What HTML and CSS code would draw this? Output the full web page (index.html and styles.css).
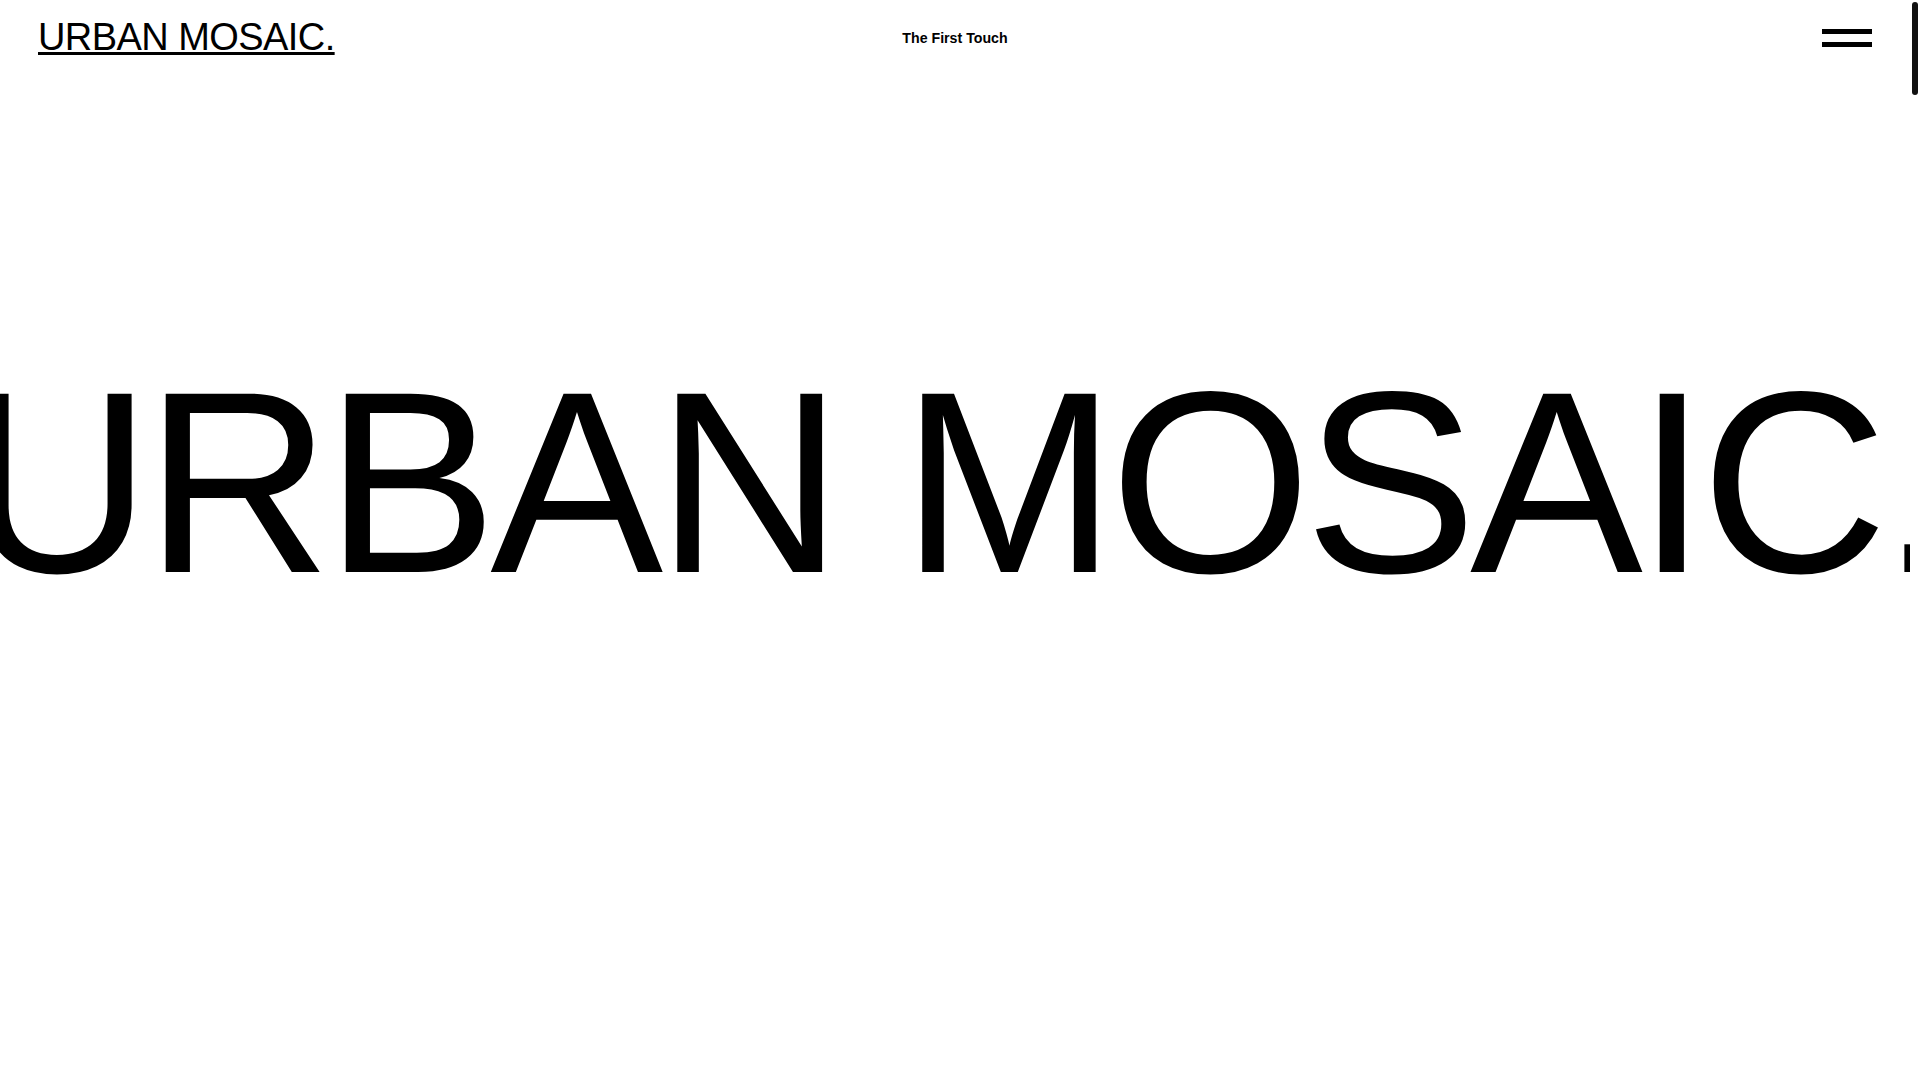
FILE: index.html
```html
<!DOCTYPE html>
<html lang="en">
<head>
<meta charset="utf-8">
<title>Urban Mosaic</title>
<link rel="stylesheet" href="styles.css">
</head>
<body>
<div class="app">
  <div class="viewport">
    <header class="site-header">
      <a class="logo" href="#">URBAN MOSAIC.</a>
      <p class="tagline">The First Touch</p>
      <button class="menu-btn" aria-label="Menu">
        <span class="bar"></span>
        <span class="bar"></span>
      </button>
    </header>
    <main>
      <section class="hero">
        <h1 class="hero-title">URBAN MOSAIC.</h1>
      </section>
    </main>
  </div>
  <div class="scroll-rail" aria-hidden="true">
    <div class="scroll-thumb"></div>
  </div>
</div>
</body>
</html>
```
FILE: styles.css
```css
html,
body {
  margin: 0;
  height: 100%;
  overflow: hidden;
  background: #fff;
}
body {
  color: #000;
  font-family: "Liberation Sans", Arial, sans-serif;
}
.app {
  display: flex;
  height: 100vh;
}
.viewport {
  flex: 1;
  min-width: 0;
  overflow: hidden;
}
.scroll-rail {
  flex: none;
  width: 10px;
  padding: 2px;
  box-sizing: border-box;
  background: #fff;
}
.scroll-thumb {
  width: 6px;
  height: 93px;
  border-radius: 3px;
  background: #111;
}
.site-header {
  display: grid;
  grid-template-columns: 1fr auto 1fr;
  align-items: center;
  height: 75px;
  padding: 0 38px;
}
.logo {
  justify-self: start;
  font-size: 38px;
  letter-spacing: -0.015em;
  color: #000;
  text-decoration: underline;
  text-decoration-thickness: 3px;
  line-height: normal;
}
.tagline {
  margin: 0;
  font-size: 14.2px;
  font-weight: 700;
}
.menu-btn {
  justify-self: end;
  display: flex;
  flex-direction: column;
  gap: 8px;
  width: 50px;
  padding: 0;
  border: 0;
  background: none;
}
.bar {
  display: block;
  width: 50px;
  height: 5px;
  background: #000;
}
.hero {
  display: flex;
  justify-content: center;
  overflow: hidden;
  padding-top: 278px;
}
.hero-title {
  margin: 0;
  flex: none;
  white-space: nowrap;
  font-size: 13.5vw;
  font-weight: 400;
  line-height: 1;
  letter-spacing: -0.0275em;
}
```
